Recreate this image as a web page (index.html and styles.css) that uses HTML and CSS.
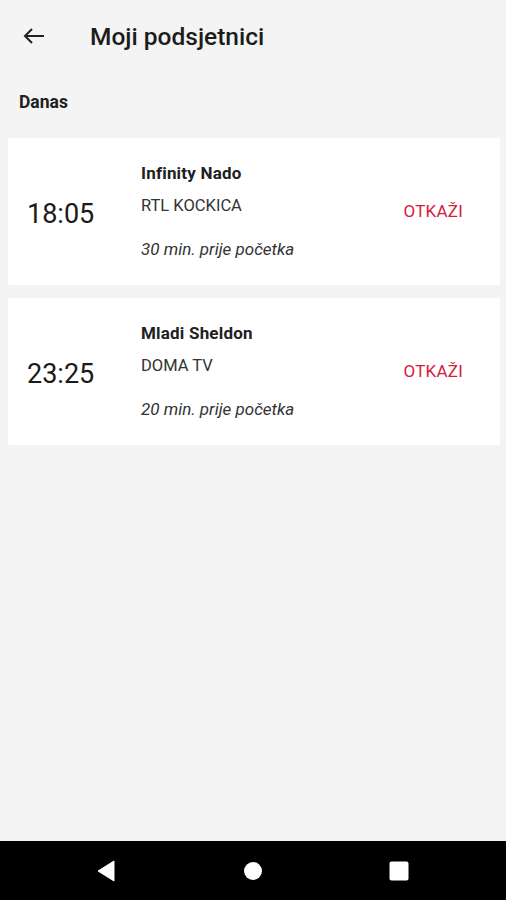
FILE: index.html
```html
<!DOCTYPE html>
<html lang="hr">
<head>
    <meta charset="UTF-8">
    <meta name="viewport" content="width=device-width, initial-scale=1.0">
    <title>Moji podsjetnici</title>
    <link rel="stylesheet" href="styles.css">
</head>
<body>
    <div class="app">
        <!-- Toolbar -->
        <div class="toolbar">
            <svg class="back" width="24" height="24" viewBox="0 0 24 24">
                <path d="M3 12H22M10 5L3 12L10 19" fill="none" stroke="#212121" stroke-width="2" />
            </svg>
            <div class="title">Moji podsjetnici</div>
        </div>

        <div class="section">Danas</div>

        <!-- Reminder list -->
        <div class="list">
            <div class="card">
                <div class="time">18:05</div>
                <div class="info">
                    <div class="show">Infinity Nado</div>
                    <div class="channel">RTL KOCKICA</div>
                    <div class="before">30 min. prije početka</div>
                </div>
                <div class="cancel">OTKAŽI</div>
            </div>
            <div class="card">
                <div class="time">23:25</div>
                <div class="info">
                    <div class="show">Mladi Sheldon</div>
                    <div class="channel">DOMA TV</div>
                    <div class="before">20 min. prije početka</div>
                </div>
                <div class="cancel">OTKAŽI</div>
            </div>
        </div>
    </div>

    <!-- Android nav bar -->
    <div class="navbar">
        <svg width="20" height="22" viewBox="0 0 20 22"><path d="M18 1V21L2 11Z" fill="#fff" stroke="#fff" stroke-width="1" stroke-linejoin="round" /></svg>
        <svg width="20" height="20" viewBox="0 0 20 20"><circle cx="10" cy="10" r="9" fill="#fff" /></svg>
        <svg width="20" height="20" viewBox="0 0 20 20"><rect x="0.5" y="0.5" width="19" height="19" rx="2" fill="#fff" /></svg>
    </div>
</body>
</html>
```

FILE: styles.css
```css
/* Base */
body, html {
    margin: 0;
    padding: 0;
    width: 100%;
    height: 100%;
    overflow: hidden;
    background-color: #f4f4f4;
    color: #212121;
    font-family: Roboto, "Noto Sans", sans-serif;
}

body {
    display: flex;
    flex-direction: column;
}

.app {
    flex: 1;
}

/* Toolbar */
.toolbar {
    display: flex;
    align-items: center;
    height: 72px;
}

.toolbar .back {
    margin-left: 22px;
    width: 24px;
    height: 24px;
}

.toolbar .title {
    margin-left: 44px;
    font-size: 24.5px;
    font-weight: 500;
    color: #1c1c1c;
}

/* Section heading */
.section {
    padding: 19px 19px 0;
    height: 22px;
    line-height: 22px;
    font-size: 17.5px;
    font-weight: 700;
}

/* Cards */
.list {
    padding: 25px 6px 0 8px;
    display: flex;
    flex-direction: column;
    gap: 13px;
}

.card {
    display: grid;
    grid-template-columns: 114px 1fr auto;
    align-items: center;
    background-color: #fff;
    padding: 24px 37px 25px 19px;
    border-radius: 2px;
}

.time {
    padding-top: 5px;
    font-size: 27px;
    color: #1a1a1a;
}

.info .show {
    font-size: 17px;
    font-weight: 700;
    letter-spacing: 0.2px;
    line-height: 22px;
}

.info .channel {
    margin-top: 10px;
    padding-top: 1px;
    font-size: 16.5px;
    line-height: 22px;
    color: #333;
}

.info .before {
    margin-top: 21px;
    font-size: 17px;
    font-style: italic;
    line-height: 22px;
    color: #333;
}

.cancel {
    font-size: 17px;
    color: #d3203b;
    letter-spacing: 0.2px;
}

/* Navigation bar */
.navbar {
    height: 59px;
    background-color: #000;
    display: flex;
    align-items: center;
    justify-content: space-between;
    padding: 0 97px 0 96px;
}
```
